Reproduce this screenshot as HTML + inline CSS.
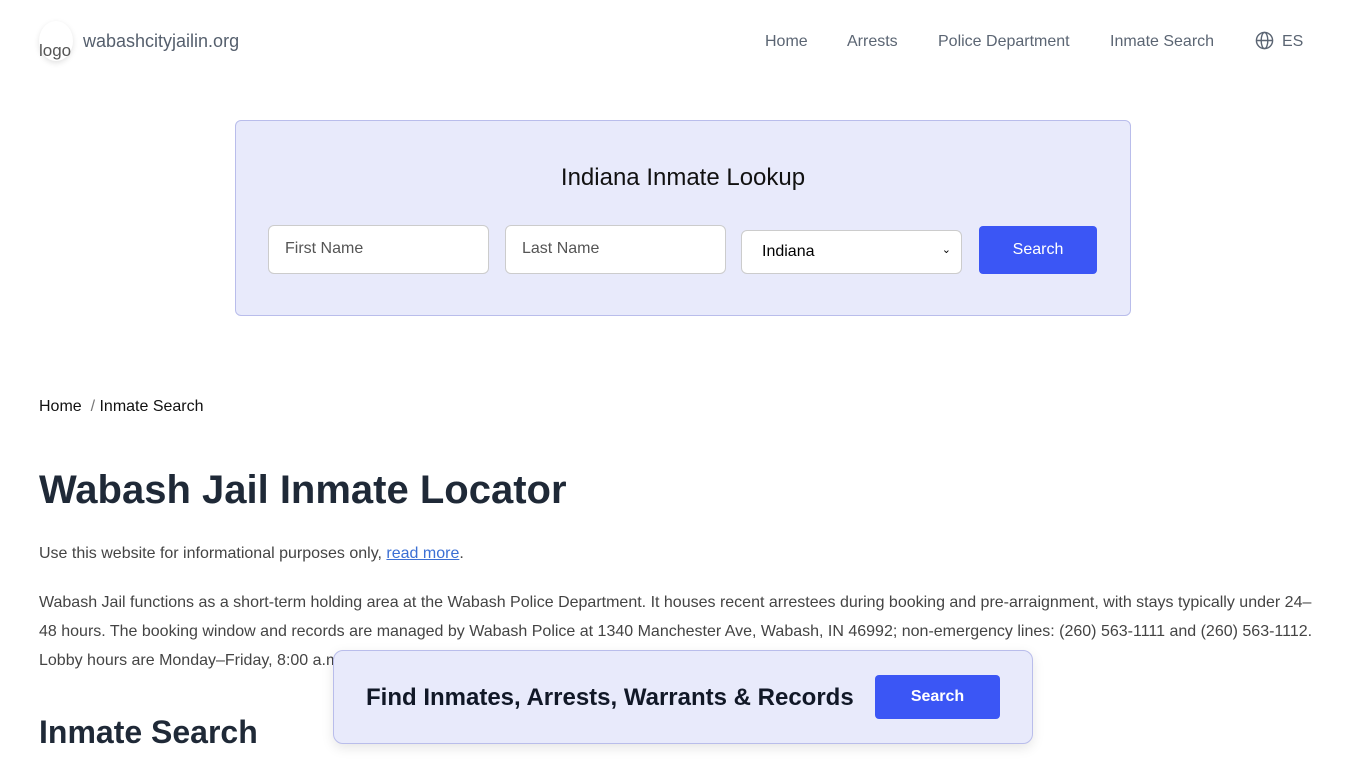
<!DOCTYPE html>
<html><head><meta charset="utf-8"><style>
body{margin:0;font-family:"Liberation Sans",Arial,sans-serif;background:#fff;width:1366px;height:768px;overflow:hidden;position:relative;color:#333}
.logo{position:absolute;left:39px;top:21px;width:34px;height:40px;border-radius:50%;box-shadow:0 2px 6px rgba(0,0,0,.12);font-size:17px;color:#555;line-height:20px;padding-top:20px;box-sizing:border-box}
.site{position:absolute;left:83px;top:31px;font-size:18px;color:#555f6d}
.nav{position:absolute;top:33px;font-size:16px;color:#5b6573}
.box{position:absolute;left:235px;top:120px;width:894px;height:194px;background:#e8eafb;border:1px solid #b9bdeb;border-radius:6px}
.box h2{position:absolute;top:43px;width:100%;text-align:center;margin:0;font-weight:normal;font-size:24px;color:#111}
.in{position:absolute;top:104px;width:221px;height:49px;border:1px solid #ccc;border-radius:6px;background:#fff;box-sizing:border-box;padding:14px 16px;font-size:16px;color:#555}
.btn{position:absolute;background:#3b56f5;color:#fff;border-radius:4px;text-align:center}
p{position:absolute;left:39px;margin:0;font-size:16px;color:#444;line-height:29px}
</style></head><body>
<div class="logo">logo</div>
<div class="site">wabashcityjailin.org</div>
<div class="nav" style="left:765px">Home</div>
<div class="nav" style="left:847px">Arrests</div>
<div class="nav" style="left:938px">Police Department</div>
<div class="nav" style="left:1110px">Inmate Search</div>
<svg style="position:absolute;left:1255px;top:31px" width="19" height="19" viewBox="0 0 20 20" fill="none" stroke="#5b6573" stroke-width="1.5"><circle cx="10" cy="10" r="8.5"/><ellipse cx="10" cy="10" rx="3.5" ry="8.5"/><path d="M1.5 10h17"/></svg>
<div class="nav" style="left:1282px">ES</div>
<div class="box"><h2>Indiana Inmate Lookup</h2>
<div class="in" style="left:32px">First Name</div>
<div class="in" style="left:269px">Last Name</div>
<div class="in" style="left:505px;top:109px;height:44px;color:#000;padding:12px 20px">Indiana<span style="position:absolute;right:10px;font-size:11px">⌄</span></div>
<div class="btn" style="left:743px;top:105px;width:118px;height:48px;line-height:48px;font-size:16px">Search</div>
</div>
<div style="position:absolute;left:39px;top:398px;font-size:16px;color:#111">Home &nbsp;<span style="color:#777">/</span> Inmate Search</div>
<div style="position:absolute;left:39px;top:468px;font-size:40px;font-weight:bold;color:#1f2937">Wabash Jail Inmate Locator</div>
<p style="top:539px">Use this website for informational purposes only, <span style="color:#3b6fd4;text-decoration:underline">read more</span>.</p>
<p style="top:588px;width:1290px">Wabash Jail functions as a short-term holding area at the Wabash Police Department. It houses recent arrestees during booking and pre-arraignment, with stays typically under 24–48 hours. The booking window and records are managed by Wabash Police at 1340 Manchester Ave, Wabash, IN 46992; non-emergency lines: (260) 563-1111 and (260) 563-1112. Lobby hours are Monday–Friday, 8:00 a.m.–4:00 p.m.</p>
<div style="position:absolute;left:39px;top:714px;font-size:32px;font-weight:bold;color:#1f2937">Inmate Search</div>
<div style="position:absolute;left:333px;top:650px;width:698px;height:92px;background:#e8eafb;border:1px solid #b9bdeb;border-radius:10px;box-shadow:0 4px 12px rgba(0,0,0,.1)">
<div style="position:absolute;left:32px;top:33px;font-size:24px;font-weight:bold;color:#111827">Find Inmates, Arrests, Warrants &amp; Records</div>
<div class="btn" style="left:541px;top:24px;width:125px;height:44px;line-height:44px;font-size:16px;font-weight:bold">Search</div>
</div>
</body></html>
